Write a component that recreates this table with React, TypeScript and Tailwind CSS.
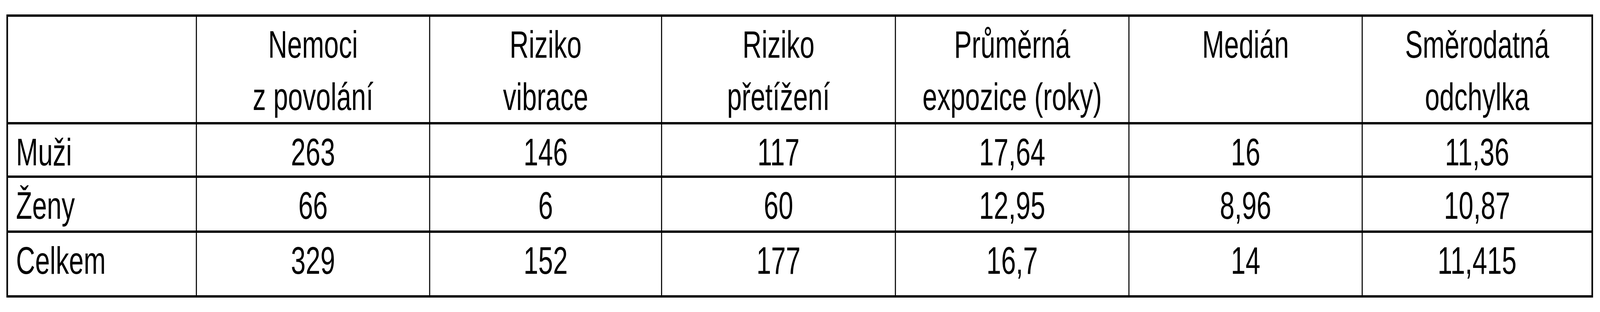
import React, { useLayoutEffect, useState } from "react";

const header: string[][] = [
  [],
  ["Nemoci", "z povolání"],
  ["Riziko", "vibrace"],
  ["Riziko", "přetížení"],
  ["Průměrná", "expozice (roky)"],
  ["Medián"],
  ["Směrodatná", "odchylka"],
];

const rows: string[][] = [
  ["Muži", "263", "146", "117", "17,64", "16", "11,36"],
  ["Ženy", "66", "6", "60", "12,95", "8,96", "10,87"],
  ["Celkem", "329", "152", "177", "16,7", "14", "11,415"],
];

const DESIGN_WIDTH = 5988;

function useFitScale() {
  const get = () =>
    typeof window === "undefined" ? 1 : Math.min(1, window.innerWidth / DESIGN_WIDTH);
  const [s, setS] = useState(get);
  useLayoutEffect(() => {
    const on = () => setS(get());
    on();
    window.addEventListener("resize", on);
    return () => window.removeEventListener("resize", on);
  }, []);
  return s;
}

export default function App() {
  const s = useFitScale();
  return (
    <div className="w-full h-[800px] bg-white overflow-hidden text-black [font-family:'Liberation_Sans',Arial,sans-serif]">
      <div
        className="w-[5988px] h-[800px] pt-[37px] pl-[24px] origin-top-left"
        style={{ transform: `scaleX(${s})` }}
      >
        <div className="inline-grid grid-cols-[703px_869px_864px_871px_870px_869px_856px] grid-rows-[270px_131px_135px_160px] gap-x-[4px] gap-y-[6px] p-[6px] bg-black text-[99px] leading-[134px]">
          {header.map((lines, i) => (
            <div
              key={`h${i}`}
              className={`bg-white pt-[4px] ${i === 0 ? "pl-[30px] text-left" : "text-center"}`}
            >
              {lines.map((l, j) => (
                <div key={j} className="whitespace-nowrap">
                  {l}
                </div>
              ))}
            </div>
          ))}
          {rows.map((r, ri) =>
            r.map((c, ci) => (
              <div
                key={`r${ri}c${ci}`}
                className={`bg-white pt-[4px] whitespace-nowrap ${ci === 0 ? "pl-[30px] text-left" : "text-center"}`}
              >
                {c}
              </div>
            ))
          )}
        </div>
      </div>
    </div>
  );
}
